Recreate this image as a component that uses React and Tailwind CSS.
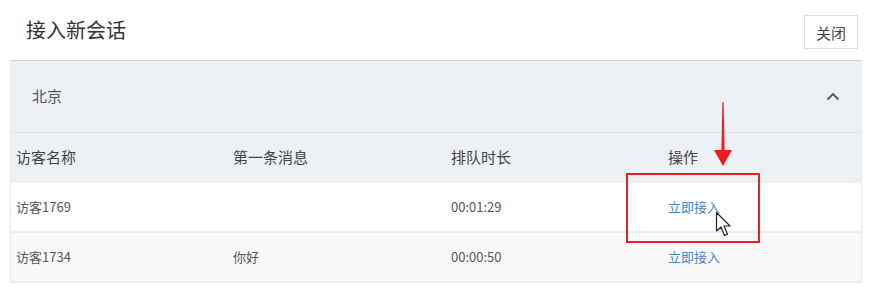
import React from "react";

const rows = [
  { name: "访客1769", msg: "", time: "00:01:29", bg: "bg-white" },
  { name: "访客1734", msg: "你好", time: "00:00:50", bg: "bg-[#f9f9f9]" },
];

export default function App() {
  return (
    <div
      className="relative w-[872px] h-[289px] bg-white overflow-hidden"
      style={{ fontFamily: '"Noto Sans CJK SC", "Noto Sans", sans-serif' }}
    >
      <div className="flex items-center justify-between h-[60px] pl-[26px] pr-[14px]">
        <div className="text-[20px] text-[#333] leading-none -mt-[1px]">接入新会话</div>
        <button className="w-[54px] h-[34px] mt-[4px] border border-[#d9d9d9] bg-white text-[15px] text-[#444] leading-none">
          关闭
        </button>
      </div>
      <div className="mx-[10px] border-t border-[#cfd2d6]">
        <div className="flex items-center justify-between h-[71px] bg-[#edf0f5] pl-[22px] pr-[22px]">
          <span className="text-[15px] text-[#555]">北京</span>
          <svg width="14" height="9" viewBox="0 0 14 9">
            <path d="M1.5 7.5 L7 2 L12.5 7.5" fill="none" stroke="#555" strokeWidth="1.8" />
          </svg>
        </div>
        <div className="border-x border-[#e4e7ec]">
          <div className="grid grid-cols-[217px_218px_217px_1fr] items-center h-[51px] bg-[#edf0f5] border-t border-[#e0e4ea] pl-[5px] pb-[2px] text-[15px] text-[#444]">
            <span>访客名称</span>
            <span>第一条消息</span>
            <span>排队时长</span>
            <span>操作</span>
          </div>
          {rows.map((r) => (
            <div
              key={r.name}
              className={`grid grid-cols-[217px_218px_217px_1fr] items-center h-[50px] ${r.bg} border-b-2 border-[#e9ecf0] pl-[5px] text-[13px] text-[#555]`}
            >
              <span>{r.name}</span>
              <span>{r.msg}</span>
              <span>{r.time}</span>
              <span className="text-[#4a80c4]">立即接入</span>
            </div>
          ))}
        </div>
      </div>

      <div className="absolute left-[626px] top-[173px] w-[134px] h-[70px] border-2 border-[#e8202a]" />

      <svg className="absolute left-[712px] top-[100px]" width="22" height="66" viewBox="0 0 22 66">
        <path d="M10.4 2 L11.6 2 L12.6 50 L20 50 L11 66 L2 50 L9.4 50 Z" fill="#f01c1c" />
      </svg>

      <svg className="absolute left-[715px] top-[211px]" width="18" height="28" viewBox="0 0 18 28">
        <path
          d="M1.5 1.5 L1.5 20 L6 16 L9.5 24.5 L12.5 23.2 L9 15 L15 15 Z"
          fill="#fff"
          stroke="#222"
          strokeWidth="1.2"
          strokeLinejoin="round"
        />
      </svg>
    </div>
  );
}
